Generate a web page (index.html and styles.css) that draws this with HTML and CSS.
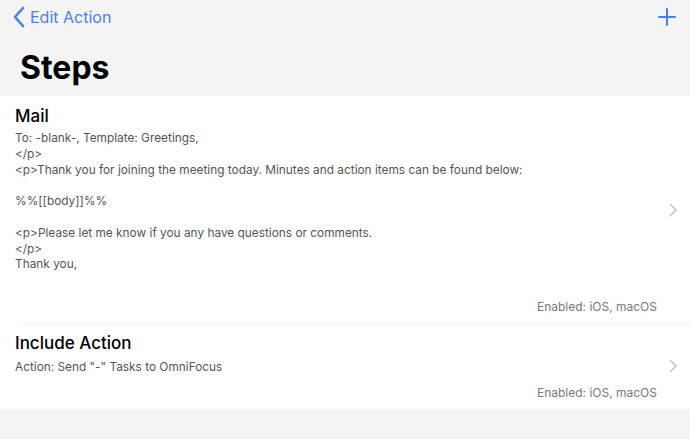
FILE: index.html
```html
<!DOCTYPE html>
<html lang="en">
<head>
  <meta charset="UTF-8">
  <meta name="viewport" content="width=device-width, initial-scale=1.0">
  <title>Steps</title>
  <link rel="stylesheet" href="styles.css">
</head>
<body>
  <div class="navbar">
    <a class="back" href="#">
      <svg class="back-icon" width="14" height="22" viewBox="0 0 14 22">
        <path d="M11 2 L3 11 L11 20" fill="none" stroke="#4a7ff0" stroke-width="2.6" stroke-linecap="round" stroke-linejoin="round"/>
      </svg>
      <span>Edit Action</span>
    </a>
    <svg class="add" width="18" height="18" viewBox="0 0 18 18">
      <path d="M9 1 V17 M1 9 H17" stroke="#4a7ff0" stroke-width="2" stroke-linecap="round"/>
    </svg>
  </div>

  <h1 class="title">Steps</h1>

  <div class="list">
    <div class="step">
      <div class="step-body">
        <div class="step-title">Mail</div>
        <div class="step-detail">To: -blank-, Template: Greetings,
&lt;/p&gt;
&lt;p&gt;Thank you for joining the meeting today. Minutes and action items can be found below:

%%[[body]]%%

&lt;p&gt;Please let me know if you any have questions or comments.
&lt;/p&gt;
Thank you,</div>
        <div class="step-enabled">Enabled: iOS, macOS</div>
      </div>
      <svg class="chevron" width="9" height="14" viewBox="0 0 9 14">
        <path d="M1.5 1.5 L7 7 L1.5 12.5" fill="none" stroke="#c4c4c7" stroke-width="1.6" stroke-linecap="round" stroke-linejoin="round"/>
      </svg>
    </div>
    <div class="step">
      <div class="step-body">
        <div class="step-title">Include Action</div>
        <div class="step-detail short">Action: Send "-" Tasks to OmniFocus</div>
        <div class="step-enabled">Enabled: iOS, macOS</div>
      </div>
      <svg class="chevron" width="9" height="14" viewBox="0 0 9 14">
        <path d="M1.5 1.5 L7 7 L1.5 12.5" fill="none" stroke="#c4c4c7" stroke-width="1.6" stroke-linecap="round" stroke-linejoin="round"/>
      </svg>
    </div>
  </div>
</body>
</html>
```

FILE: styles.css
```css
body {
  margin: 0;
  background-color: #f4f4f4;
  font-family: Inter, "Noto Sans", sans-serif;
  color: #000;
}

.navbar {
  display: flex;
  justify-content: space-between;
  align-items: center;
  height: 33px;
  padding: 0 14px 0 12px;
}

.back {
  display: flex;
  align-items: center;
  gap: 4px;
  color: #4a7ff0;
  text-decoration: none;
  font-size: 16px;
}

.title {
  margin: 0;
  padding: 14px 20px 7px;
  font-size: 32px;
  font-weight: 700;
  line-height: 42px;
}

.list {
  background-color: #fff;
}

.step {
  display: flex;
  align-items: center;
  padding-left: 15px;
  padding-right: 12px;
  position: relative;
}

.step + .step::before {
  content: "";
  position: absolute;
  top: 0;
  left: 20px;
  right: 0;
  height: 1px;
  background-color: #f0f0f0;
}

.step-body {
  flex: 1;
  display: flex;
  flex-direction: column;
}

.step-title {
  font-size: 17px;
  font-weight: 500;
  line-height: 22px;
  margin-top: 9px;
}

.step-detail {
  white-space: pre-line;
  font-size: 11.85px;
  line-height: 15.8px;
  color: #555;
  margin-top: 4px;
  margin-bottom: 26px;
}

.step-detail.short {
  margin-top: 6px;
  margin-bottom: 9px;
}

.step-enabled {
  align-self: flex-end;
  font-size: 12px;
  line-height: 16px;
  color: #777;
  margin-bottom: 8px;
}

.chevron {
  margin-left: 12px;
}
```
